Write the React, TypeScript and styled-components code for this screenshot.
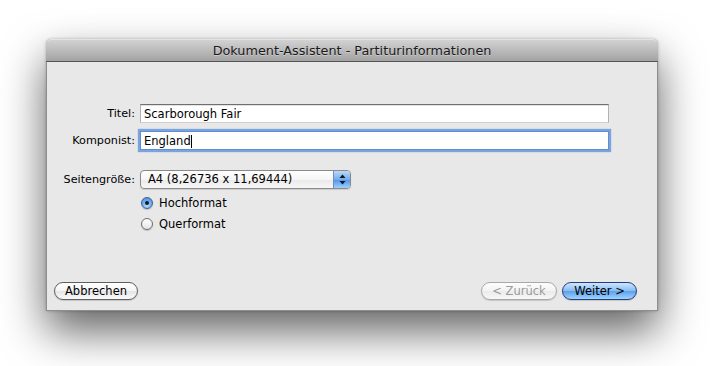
import React from "react";
import styled, { createGlobalStyle, css } from "styled-components";

const GlobalStyle = createGlobalStyle`
  html, body {
    margin: 0;
    background: #ffffff;
  }
  body {
    font-family: "DejaVu Sans", "Liberation Sans", sans-serif;
    font-size: 11.5px;
    color: #000;
  }
`;

const Page = styled.div`
  min-height: 366px;
  box-sizing: border-box;
  padding: 39px 0 0 46px;
`;

const Window = styled.div`
  width: 612px;
  height: 272px;
  box-sizing: border-box;
  display: flex;
  flex-direction: column;
  border: 1px solid #8e8e8e;
  border-top: none;
  border-radius: 5px 5px 0 0;
  background: #e8e8e8;
  box-shadow: 0 20px 44px rgba(0, 0, 0, 0.62), 0 0 3px rgba(0, 0, 0, 0.25);
`;

const TitleBar = styled.div`
  height: 21px;
  margin: 0 -1px;
  display: flex;
  align-items: center;
  justify-content: center;
  border-radius: 5px 5px 0 0;
  border-top: 1px solid #e4e4e4;
  border-bottom: 1px solid #555555;
  background: linear-gradient(#d2d2d2, #a3a3a3);
  font-size: 12.8px;
  color: #1a1a1a;
  text-shadow: 0 1px 0 rgba(255, 255, 255, 0.35);
`;

const Content = styled.div`
  flex: 1;
  display: flex;
  flex-direction: column;
`;

const Form = styled.div`
  display: grid;
  grid-template-columns: 88px 1fr;
  column-gap: 5px;
  padding: 42px 48px 0 0;
`;

const Label = styled.div<{ $mt?: number }>`
  text-align: right;
  line-height: 20px;
  height: 19px;
  font-size: 11.2px;
  white-space: nowrap;
  margin-top: ${(p) => p.$mt ?? 0}px;
`;

const TextField = styled.div<{ $focused?: boolean; $mt?: number }>`
  height: 19px;
  box-sizing: border-box;
  background: #fff;
  padding-left: 3px;
  line-height: 18px;
  margin-top: ${(p) => p.$mt ?? 0}px;
  border: 1px solid;
  border-color: #6f6f6f #b2b2b2 #cfcfcf #b2b2b2;
  box-shadow: inset 0 1px 0 #e2e2e2;
  ${(p) =>
    p.$focused &&
    css`
      border-color: #5e8fd4;
      box-shadow: 0 0 1px 2px rgba(104, 150, 218, 0.85);
    `}
`;

const Caret = styled.span`
  display: inline-block;
  width: 0;
  height: 13px;
  border-left: 1px solid #000;
  vertical-align: -3px;
`;

const Popup = styled.div`
  width: 211px;
  height: 19px;
  box-sizing: border-box;
  margin-top: 20px;
  display: flex;
  border: 1px solid #8a8a8a;
  border-radius: 4px;
  overflow: hidden;
  background: linear-gradient(#ffffff, #f6f6f6 50%, #e9e9e9 51%, #f7f7f7);
  box-shadow: 0 1px 1px rgba(0, 0, 0, 0.12);
`;

const PopupText = styled.div`
  flex: 1;
  padding-left: 7px;
  line-height: 17px;
  white-space: nowrap;
`;

const PopupArrows = styled.div`
  width: 16px;
  display: flex;
  align-items: center;
  justify-content: center;
  border-left: 1px solid #6f8fbf;
  background: linear-gradient(#bcd9f8, #72acee 50%, #4f93e6 51%, #9fd0fb);
`;

const Options = styled.div`
  grid-column: 2;
  display: flex;
  flex-direction: column;
  gap: 6px;
  margin-top: 6px;
`;

const Option = styled.div`
  display: flex;
  align-items: center;
  gap: 6px;
  height: 15px;
  padding-left: 1px;
`;

const RadioDot = styled.span<{ $checked?: boolean }>`
  width: 12px;
  height: 12px;
  box-sizing: border-box;
  border-radius: 50%;
  display: flex;
  align-items: center;
  justify-content: center;
  border: 1px solid #6d6d6d;
  background: linear-gradient(#ffffff, #e4e4e4);
  box-shadow: 0 1px 1px rgba(0, 0, 0, 0.18);
  ${(p) =>
    p.$checked &&
    css`
      border-color: #3d5f91;
      background: radial-gradient(circle at 50% 75%, #b8e0ff, #6aa8ec 55%, #4d8de0);
      &::after {
        content: "";
        width: 4px;
        height: 4px;
        border-radius: 50%;
        background: #121a28;
      }
    `}
`;

const ButtonBar = styled.div`
  margin-top: auto;
  display: flex;
  align-items: center;
  gap: 5px;
  padding: 0 20px 10px 7px;
`;

const Button = styled.button<{ $variant?: "default" | "primary" | "disabled"; $w: number }>`
  width: ${(p) => p.$w}px;
  height: 18px;
  padding: 0;
  font: inherit;
  font-size: 11.5px;
  line-height: 16px;
  border-radius: 9px;
  color: #000;
  border: 1px solid #5f5f5f;
  background: linear-gradient(#ffffff, #f4f4f4 50%, #e4e4e4 51%, #fbfbfb);
  box-shadow: 0 1px 1px rgba(0, 0, 0, 0.15);
  ${(p) =>
    p.$variant === "disabled" &&
    css`
      color: #9a9a9a;
      border-color: #a9a9a9;
      background: linear-gradient(#fdfdfd, #f3f3f3 50%, #ebebeb 51%, #f7f7f7);
    `}
  ${(p) =>
    p.$variant === "primary" &&
    css`
      border-color: #1f3f86;
      background: linear-gradient(#cfe6fd, #86bbf1 50%, #5c9fe9 51%, #9fd4fd);
    `}
`;

const Spacer = styled.div`
  flex: 1;
`;

const App = () => {
  return (
    <>
      <GlobalStyle />
      <Page>
        <Window>
          <TitleBar>Dokument-Assistent - Partiturinformationen</TitleBar>
          <Content>
            <Form>
              <Label>Titel:</Label>
              <TextField>Scarborough Fair</TextField>
              <Label $mt={8}>Komponist:</Label>
              <TextField $mt={8} $focused>
                England
                <Caret />
              </TextField>
              <Label $mt={20}>Seitengröße:</Label>
              <Popup>
                <PopupText>A4 (8,26736 x 11,69444)</PopupText>
                <PopupArrows>
                  <svg width="7" height="11" viewBox="0 0 7 11">
                    <path d="M3.5 0.5 L6.5 4 L0.5 4 Z" fill="#0d1526" />
                    <path d="M3.5 10.5 L6.5 7 L0.5 7 Z" fill="#0d1526" />
                  </svg>
                </PopupArrows>
              </Popup>
              <Options>
                <Option>
                  <RadioDot $checked />
                  Hochformat
                </Option>
                <Option>
                  <RadioDot />
                  Querformat
                </Option>
              </Options>
            </Form>
            <ButtonBar>
              <Button $w={84}>Abbrechen</Button>
              <Spacer />
              <Button $w={76} $variant="disabled">
                &lt; Zurück
              </Button>
              <Button $w={75} $variant="primary">
                Weiter &gt;
              </Button>
            </ButtonBar>
          </Content>
        </Window>
      </Page>
    </>
  );
};

export default App;
